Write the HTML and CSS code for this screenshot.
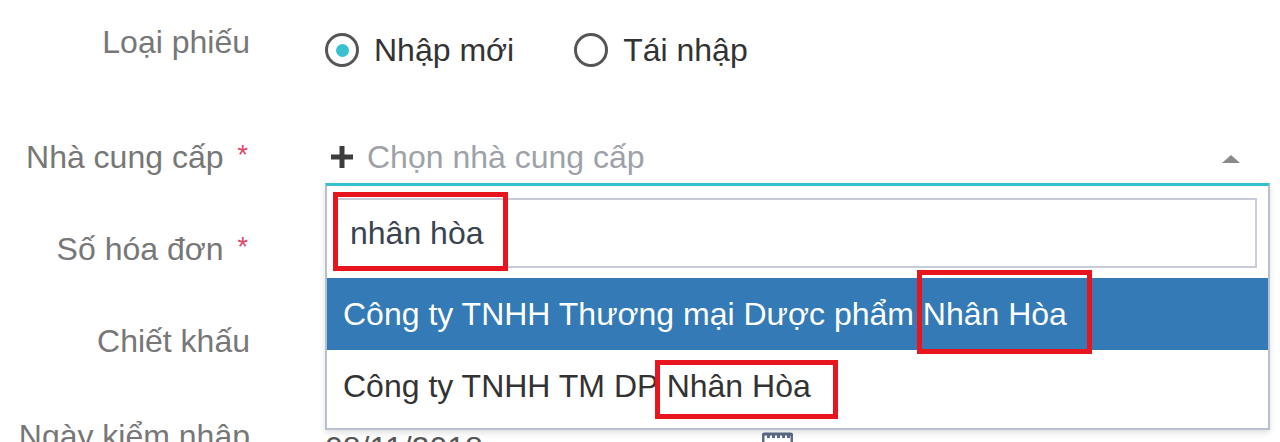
FILE: index.html
```html
<!DOCTYPE html>
<html lang="vi">
<head>
<meta charset="UTF-8">
<meta name="viewport" content="width=device-width, initial-scale=1.0">
<title>Phiếu nhập kho</title>
<link rel="stylesheet" href="styles.css">
</head>
<body>
  <form class="form">
    <div class="row row-first">
      <label class="label">Loại phiếu</label>
      <div class="control radios">
        <label class="radio"><span class="radio-dot checked"></span>Nhập mới</label>
        <label class="radio"><span class="radio-dot"></span>Tái nhập</label>
      </div>
    </div>

    <div class="row">
      <label class="label">Nhà cung cấp<span class="req">*</span></label>
      <div class="control select">
        <div class="select-head">
          <svg class="plus" width="24" height="24" viewBox="0 0 24 24">
            <rect x="9.5" y="1" width="5" height="22" fill="#3d3d3d"/>
            <rect x="1" y="9.5" width="22" height="5" fill="#3d3d3d"/>
          </svg>
          <span class="placeholder">Chọn nhà cung cấp</span>
          <span class="caret"></span>
        </div>
        <div class="select-drop">
          <div class="search">
            <input type="text" class="search-input" value="nhân hòa">
          </div>
          <ul class="options">
            <li class="option active">Công ty TNHH Thương mại Dược phẩm <span class="hit hit-a">Nhân Hòa</span></li>
            <li class="option">Công ty TNHH TM DP <span class="hit hit-b">Nhân Hòa</span></li>
          </ul>
        </div>
      </div>
    </div>

    <div class="row">
      <label class="label">Số hóa đơn<span class="req">*</span></label>
      <div class="control"><input type="text" class="field"></div>
    </div>

    <div class="row">
      <label class="label">Chiết khấu</label>
      <div class="control"><input type="text" class="field"></div>
    </div>

    <div class="row row-last">
      <label class="label">Ngày kiểm nhập</label>
      <div class="control">
        <div class="date-field">
          <span class="date-text">08/11/2018</span>
          <svg class="cal" width="31" height="30" viewBox="0 0 31 30">
            <rect x="1" y="2" width="29" height="27" rx="2" fill="none" stroke="#5d6b87" stroke-width="3"/>
            <rect x="5" y="3" width="3" height="3" fill="#5d6b87"/>
            <rect x="10" y="3" width="3" height="3" fill="#5d6b87"/>
            <rect x="15" y="3" width="3" height="3" fill="#5d6b87"/>
            <rect x="20" y="3" width="3" height="3" fill="#5d6b87"/>
            <rect x="25" y="3" width="3" height="3" fill="#5d6b87"/>
          </svg>
        </div>
      </div>
    </div>
  </form>
</body>
</html>
```

FILE: styles.css
```css
body {
  margin: 0;
  background: #fff;
  font-family: "Liberation Sans", Arial, sans-serif;
  font-size: 32px;
  line-height: 36px;
  color: #333;
  overflow: hidden;
}

.form {
  padding-top: 24px;
}

.row {
  display: grid;
  grid-template-columns: 250px 1fr;
  column-gap: 75px;
  align-items: start;
  height: 92px;
  padding-right: 10px;
}

.row-first {
  height: 115px;
}

.row-last {
  padding-top: 3px;
}

.label {
  text-align: right;
  color: #777;
  white-space: nowrap;
}

.req {
  color: #e0456a;
  font-size: 27px;
  margin-left: 14px;
  margin-right: 2px;
  vertical-align: top;
  line-height: 32px;
}

.control {
  position: relative;
}

/* radio buttons */
.radios {
  display: flex;
  gap: 60px;
  margin-top: 8px;
}

.radio {
  display: flex;
  align-items: center;
  gap: 15px;
  color: #333;
}

.radio-dot {
  width: 34px;
  height: 34px;
  box-sizing: border-box;
  border: 3px solid #555;
  border-radius: 50%;
  display: grid;
  place-items: center;
}

.radio-dot.checked::after {
  content: "";
  width: 13px;
  height: 13px;
  border-radius: 50%;
  background: #36c0d0;
}

/* supplier select */
.select-head {
  display: flex;
  align-items: center;
  height: 36px;
  padding-left: 5px;
}

.plus {
  margin-right: 13px;
}

.placeholder {
  color: #9ea2a8;
}

.caret {
  margin-left: auto;
  margin-right: 30px;
  margin-top: 4px;
  width: 0;
  height: 0;
  border-left: 9px solid transparent;
  border-right: 9px solid transparent;
  border-bottom: 8px solid #8a8a8a;
}

.select-drop {
  position: absolute;
  top: 44px;
  left: 0;
  right: 0;
  z-index: 2;
  background: #fff;
  border: 2px solid #b8bfcf;
  border-top: 3px solid #36bfd0;
  box-shadow: 0 3px 6px rgba(0, 0, 0, 0.12);
}

.search {
  position: relative;
  padding: 12px 11px 10px 8px;
}

.search-input {
  display: block;
  width: 100%;
  height: 70px;
  box-sizing: border-box;
  border: 2px solid #c8ccd9;
  padding: 0 13px;
  font: inherit;
  color: #3a4350;
  outline: none;
}

.search::after {
  content: "";
  position: absolute;
  left: 6px;
  top: 6px;
  width: 175px;
  height: 79px;
  box-sizing: border-box;
  border: 5px solid #e8141e;
}

.options {
  list-style: none;
  margin: 0;
  padding: 0 0 6px;
}

.option {
  padding: 18px 18px 18px 16px;
  white-space: nowrap;
  color: #333;
}

.option.active {
  background: #337ab7;
  color: #fff;
}

.hit {
  position: relative;
}

.hit::after {
  content: "";
  position: absolute;
  border: 5px solid #e8141e;
}

.hit-a::after {
  left: -6px;
  right: -25px;
  top: -26px;
  bottom: -22px;
}

.hit-b::after {
  left: -12px;
  right: -27px;
  top: -8px;
  bottom: -15px;
}

/* plain inputs under the open list */
.field {
  display: block;
  width: 100%;
  height: 60px;
  box-sizing: border-box;
  border: 2px solid #c8ccd9;
  font: inherit;
}

.date-field {
  display: flex;
  justify-content: space-between;
  width: 468px;
  padding-top: 12px;
}

.date-text {
  color: #555;
}

.cal {
  margin-top: 2px;
}
```
